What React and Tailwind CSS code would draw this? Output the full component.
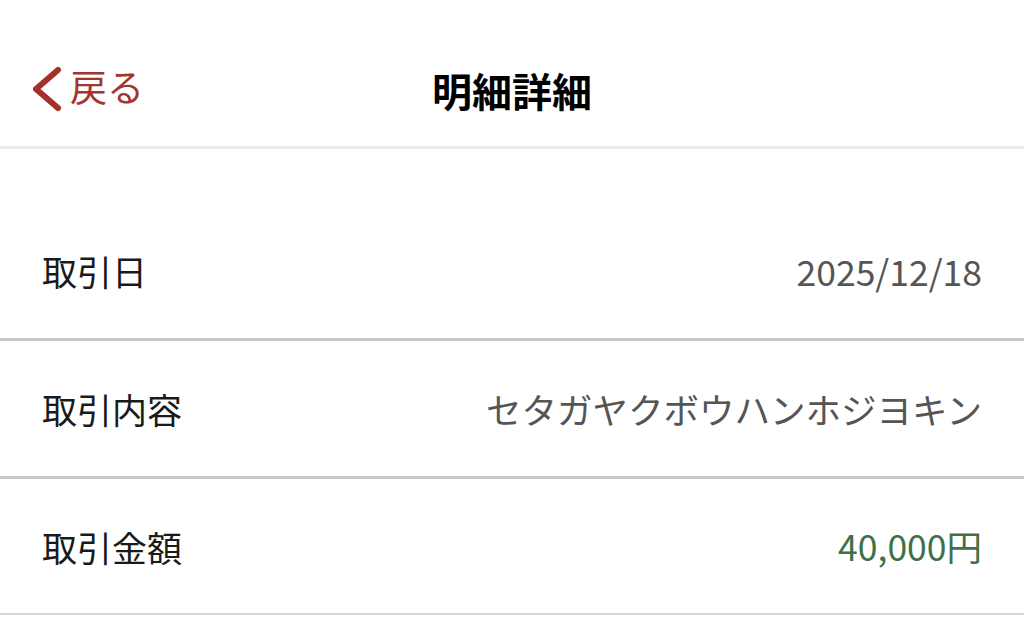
const rows = [
  { label: "取引日", value: "2025/12/18", tone: "text-[#555555]" },
  { label: "取引内容", value: "セタガヤクボウハンホジヨキン", tone: "text-[#555555]" },
  { label: "取引金額", value: "40,000円", tone: "text-[#3e7149]" },
];

export default function App() {
  return (
    <div
      className="min-h-screen bg-white"
      style={{ fontFamily: '"Noto Sans CJK JP", "Noto Sans", sans-serif' }}
    >
      <header className="relative flex h-[149px] items-center justify-center border-b-[3px] border-[#ececec] pt-[34px]">
        <button className="absolute left-[30px] top-[66px] flex items-center gap-[6px] text-[#a3352d]">
          <svg width="34" height="46" viewBox="0 0 34 46" fill="none">
            <path
              d="M28 4 L6 23 L28 42"
              stroke="#a3312a"
              strokeWidth="6"
              strokeLinecap="round"
              strokeLinejoin="round"
            />
          </svg>
          <span className="-mt-[6px] text-[37px] leading-none">戻る</span>
        </button>
        <h1 className="text-[40px] font-bold leading-none text-black">明細詳細</h1>
      </header>

      <main className="pt-[54px]">
        {rows.map((row, i) => (
          <div
            key={row.label}
            className={
              i === rows.length - 1
                ? "flex h-[136px] items-center justify-between border-b-[2px] border-[#d6d6d6] px-[42px]"
                : "flex h-[138px] items-center justify-between border-b-[3px] border-[#c8c8c8] px-[42px]"
            }
          >
            <span className="text-[35px] leading-none text-[#1a1a1a]">{row.label}</span>
            <span className={`text-[35.5px] leading-none ${row.tone}`}>{row.value}</span>
          </div>
        ))}
      </main>
    </div>
  );
}
